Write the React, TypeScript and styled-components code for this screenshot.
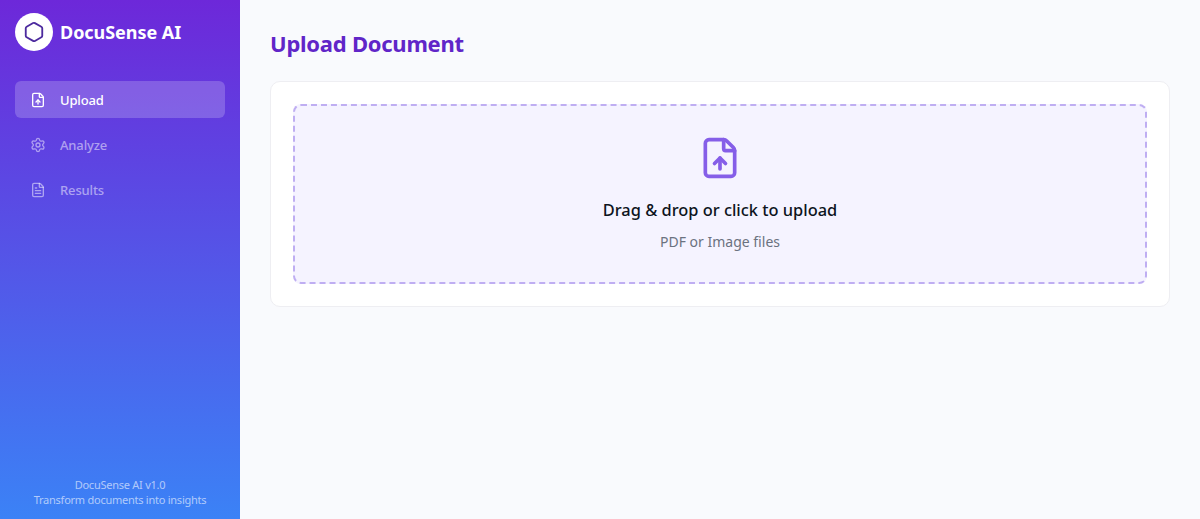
import React from 'react';
import styled, { createGlobalStyle } from 'styled-components';
import { FileText, FileUp, Hexagon, Settings } from 'lucide-react';

const GlobalStyle = createGlobalStyle`
  html, body {
    margin: 0;
    padding: 0;
  }
  body {
    font-family: "Noto Sans", "Open Sans", sans-serif;
  }
  * {
    box-sizing: border-box;
  }
`;

const navItems = [
  { label: 'Upload', icon: FileUp, active: true },
  { label: 'Analyze', icon: Settings, active: false },
  { label: 'Results', icon: FileText, active: false },
];

const App = () => {
  return (
    <Layout>
      <GlobalStyle />
      <Sidebar>
        <Brand>
          <LogoCircle>
            <Hexagon size={22} color="#4c2a9e" strokeWidth={2} />
          </LogoCircle>
          <BrandName>DocuSense AI</BrandName>
        </Brand>
        <Nav>
          {navItems.map(({ label, icon: Icon, active }) => (
            <NavItem key={label} $active={active}>
              <Icon size={16} />
              <span>{label}</span>
            </NavItem>
          ))}
        </Nav>
        <SidebarFooter>
          <div>DocuSense AI v1.0</div>
          <div>Transform documents into insights</div>
        </SidebarFooter>
      </Sidebar>
      <Main>
        <Title>Upload Document</Title>
        <Card>
          <DropZone>
            <FileUp size={44} color="#855ee8" strokeWidth={2} />
            <DropTitle>Drag &amp; drop or click to upload</DropTitle>
            <DropHint>PDF or Image files</DropHint>
          </DropZone>
        </Card>
      </Main>
    </Layout>
  );
};

const Layout = styled.div`
  display: flex;
  width: 100%;
  height: 100vh;
  overflow: hidden;
  background: #f9fafd;
`;

const Sidebar = styled.aside`
  display: flex;
  flex-direction: column;
  flex: 0 0 240px;
  padding: 13px 15px 12px;
  background: linear-gradient(180deg, #6d28d9 0%, #3b82f6 100%);
  color: #fff;
`;

const Brand = styled.div`
  display: flex;
  align-items: center;
  gap: 7px;
  height: 38px;
`;

const LogoCircle = styled.div`
  display: flex;
  align-items: center;
  justify-content: center;
  width: 38px;
  height: 38px;
  border-radius: 50%;
  background: #fff;
`;

const BrandName = styled.div`
  font-size: 18px;
  font-weight: 700;
  letter-spacing: -0.05px;
`;

const Nav = styled.nav`
  display: flex;
  flex-direction: column;
  gap: 8px;
  margin-top: 30px;
`;

const NavItem = styled.div<{ $active: boolean }>`
  display: flex;
  align-items: center;
  gap: 14px;
  height: 37px;
  padding: 0 15px;
  border-radius: 6px;
  font-size: 13px;
  font-weight: 500;
  letter-spacing: -0.15px;
  background: ${(p) => (p.$active ? 'rgba(255, 255, 255, 0.2)' : 'transparent')};
  color: ${(p) => (p.$active ? '#fff' : 'rgba(255, 255, 255, 0.5)')};
`;

const SidebarFooter = styled.div`
  margin-top: auto;
  font-size: 11px;
  line-height: 15px;
  letter-spacing: -0.25px;
  text-align: center;
  color: rgba(255, 255, 255, 0.6);
`;

const Main = styled.main`
  flex: 1;
  padding: 28px 30px;
`;

const Title = styled.h1`
  margin: 0 0 22px;
  font-size: 22px;
  line-height: 31px;
  font-weight: 700;
  letter-spacing: -0.25px;
  color: #6025c8;
`;

const Card = styled.section`
  padding: 22px;
  border: 1px solid #eeeef2;
  border-radius: 10px;
  background: #fff;
`;

const DropZone = styled.div`
  display: flex;
  flex-direction: column;
  align-items: center;
  height: 180px;
  padding-top: 30px;
  border: 2px dashed #bfaef2;
  border-radius: 8px;
  background: #f5f3ff;
`;

const DropTitle = styled.div`
  margin-top: 18px;
  font-size: 16.4px;
  line-height: 24px;
  font-weight: 500;
  color: #0d1320;
`;

const DropHint = styled.div`
  margin-top: 10px;
  font-size: 14px;
  line-height: 20px;
  color: #6b7280;
`;

export default App;
